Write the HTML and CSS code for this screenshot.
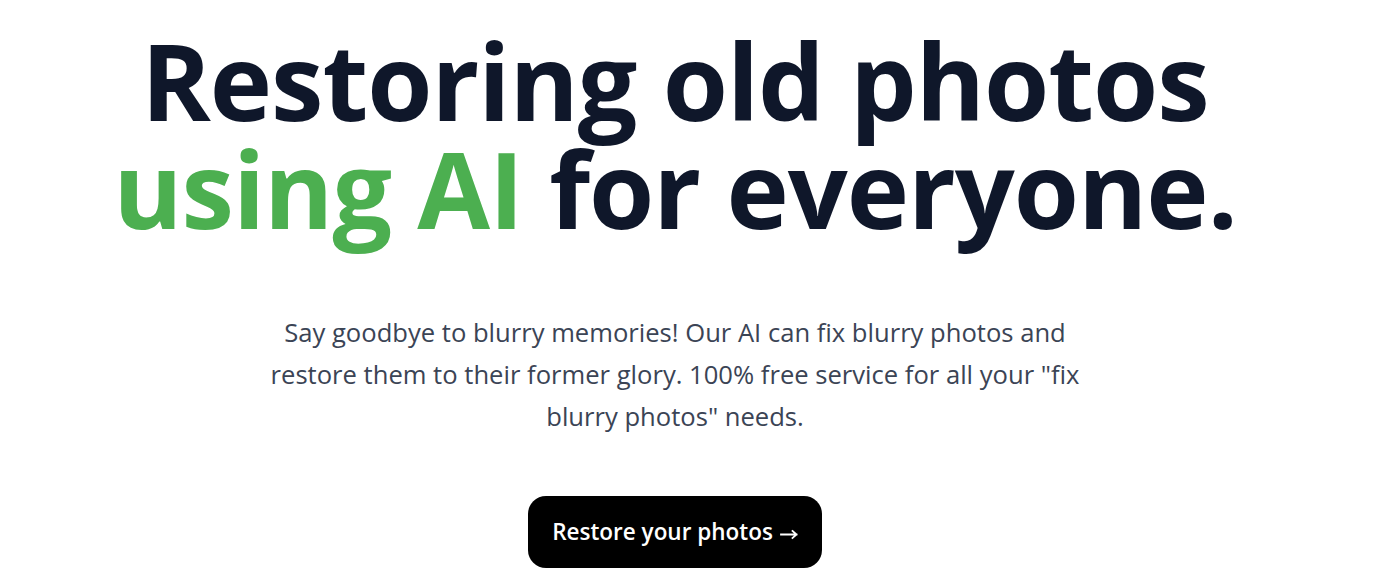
FILE: index.html
```html
<!DOCTYPE html>
<html lang="en">
<head>
<meta charset="utf-8">
<title>Restore photos</title>
<link rel="stylesheet" href="styles.css">
</head>
<body>
<main class="hero">
  <h1 class="title">Restoring old photos <span class="accent">using AI</span> for everyone.</h1>
  <p class="lead">Say goodbye to blurry memories! Our AI can fix blurry photos and restore them to their former glory. 100% free service for all your "fix blurry photos" needs.</p>
  <a class="cta" href="#">Restore your photos <svg class="arrow" width="18" height="12" viewBox="0 0 18 12" aria-hidden="true"><path d="M1 6.5H16.5M12.5 3L16.5 6.5L12.5 10" fill="none" stroke="#fff" stroke-width="1.8" stroke-linecap="square"/></svg></a>
</main>
</body>
</html>
```

FILE: styles.css
```css
html, body {
  margin: 0;
  padding: 0;
  background: #ffffff;
}
body {
  font-family: "Open Sans", "Noto Sans", sans-serif;
}
.hero {
  box-sizing: border-box;
  width: 1350px;
  display: flex;
  flex-direction: column;
  align-items: center;
  text-align: center;
  padding-top: 26px;
}
.title {
  margin: 0;
  max-width: 1344px;
  font-size: 105.5px;
  line-height: 108px;
  font-weight: 700;
  color: #0f172a;
  letter-spacing: -0.01em;
}
.accent {
  color: #4caf50;
}
.lead {
  margin: 70px 0 0;
  max-width: 860px;
  font-size: 25.6px;
  line-height: 42px;
  color: #3b4455;
}
.cta {
  margin-top: 58px;
  display: inline-flex;
  align-items: center;
  gap: 7px;
  background: #000;
  color: #fff;
  text-decoration: none;
  font-size: 22.5px;
  line-height: 36px;
  font-weight: 600;
  padding: 18px 24px;
  border-radius: 18px;
}
.arrow {
  display: block;
  margin-top: 3px;
}
```
